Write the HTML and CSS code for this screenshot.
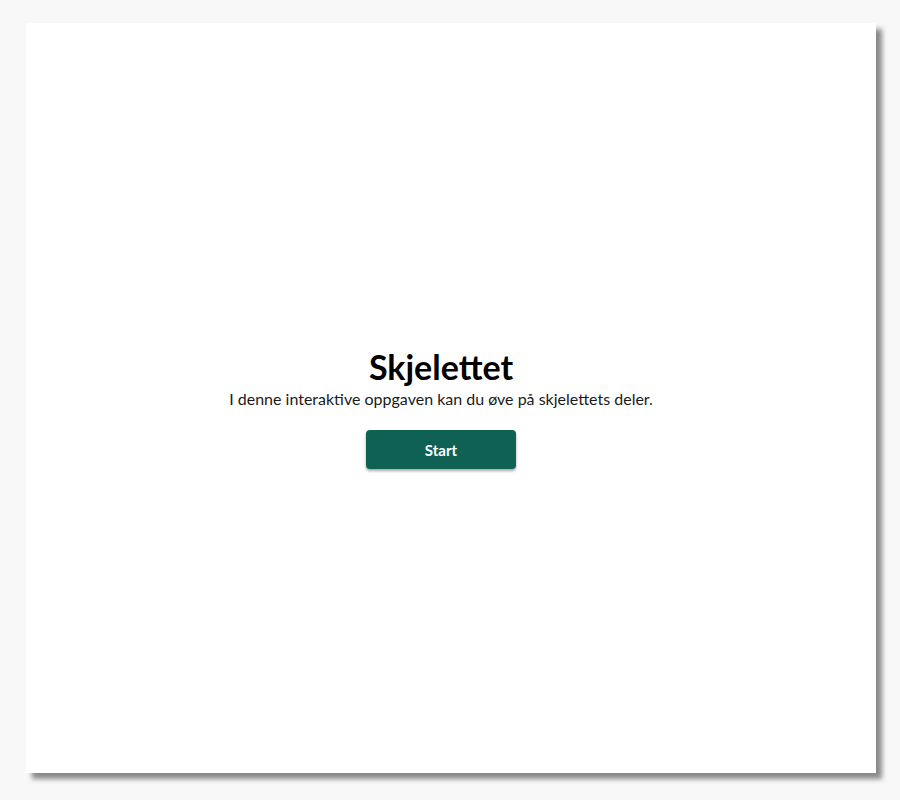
FILE: index.html
```html
<!DOCTYPE html>
<html lang="no">
<head>
<meta charset="utf-8">
<title>Skjelettet</title>
<link rel="stylesheet" href="styles.css">
</head>
<body>
<main class="card">
  <section class="intro">
    <h1 class="title">Skjelettet</h1>
    <p class="lead">I denne interaktive oppgaven kan du øve på skjelettets deler.</p>
    <button class="start" type="button">Start</button>
  </section>
</main>
</body>
</html>
```
FILE: styles.css
```css
html, body {
  margin: 0;
  padding: 0;
  background: #f8f8f8;
}
body {
  padding: 23px 24px 27px 26px;
  font-family: "Lato", "Open Sans", sans-serif;
  color: #111;
}
.card {
  height: 750px;
  background: #fff;
  box-shadow: 6px 6px 5px rgba(0, 0, 0, 0.45);
  display: flex;
  align-items: center;
  justify-content: center;
  padding-right: 20px;
  box-sizing: border-box;
}
.intro {
  display: flex;
  flex-direction: column;
  align-items: center;
  margin-top: 19px;
}
.title {
  margin: 0;
  font-size: 34px;
  line-height: 42px;
  font-weight: 700;
  color: #000;
}
.lead {
  margin: 0;
  font-size: 16px;
  line-height: 22px;
  color: #1a1a1a;
}
.start {
  margin-top: 20px;
  width: 150px;
  height: 39px;
  border: none;
  border-radius: 4px;
  background: #0e6153;
  color: #fff;
  font-family: "Lato", sans-serif;
  font-weight: 700;
  font-size: 15px;
  box-shadow: 0 2px 3px rgba(0, 0, 0, 0.35);
  cursor: pointer;
}
```
